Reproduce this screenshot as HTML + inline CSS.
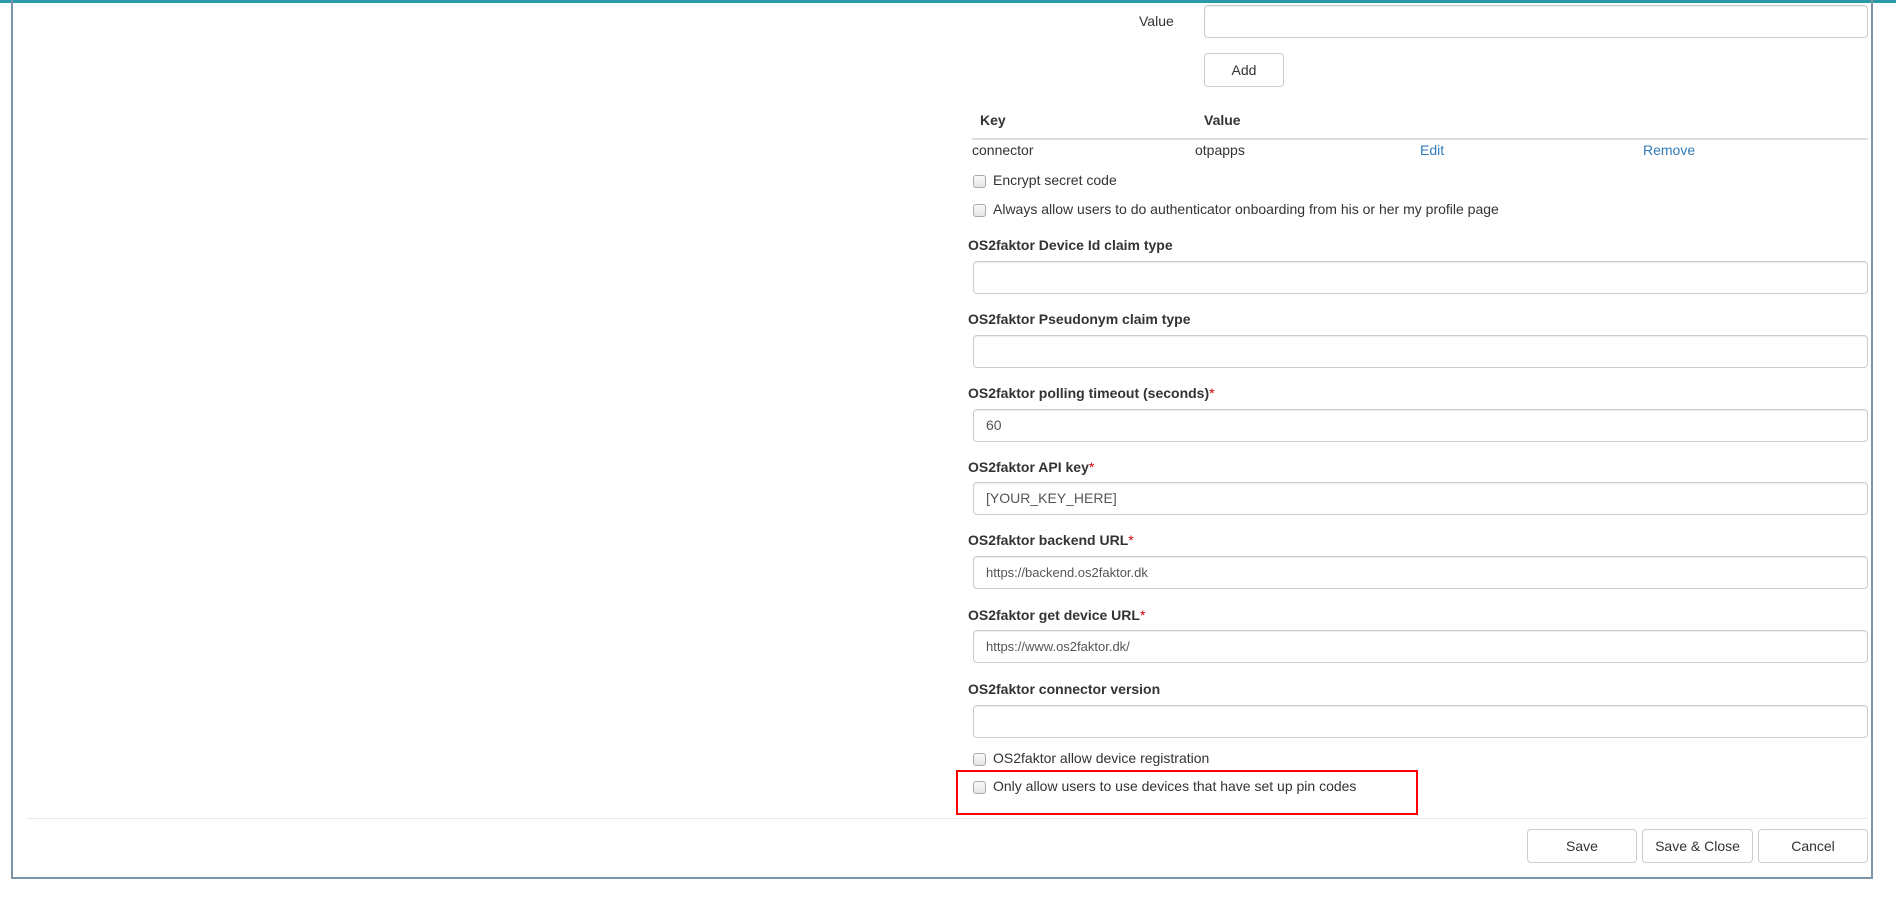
<!DOCTYPE html>
<html><head><meta charset="utf-8"><style>
*{box-sizing:border-box;margin:0;padding:0}
body{width:1896px;height:898px;background:#fff;font-family:"Liberation Sans",Arial,sans-serif;font-size:14px;color:#333;position:relative;overflow:hidden}
.a{position:absolute;white-space:nowrap}
.topbar{position:absolute;left:0;top:0;width:1896px;height:3px;background:#2a9aa8}
.frame{position:absolute;left:11px;top:-2px;width:1862px;height:881px;border:2px solid #7d95ab;border-top:none}
.inp{position:absolute;left:973px;width:895px;height:33px;border:1px solid #ccc;border-radius:4px;box-shadow:inset 0 1px 1px rgba(0,0,0,.075);padding:0 12px;line-height:31px;color:#555;font-size:14px}
.lbl{position:absolute;left:968px;font-weight:bold;font-size:14px;color:#333;line-height:16px}
.req{color:#c00;font-weight:normal}
.cb{position:absolute;left:973px;width:13px;height:13px;border:1px solid #aaa;border-radius:3px;background:linear-gradient(#fafafa,#e4e4e4)}
.ct{position:absolute;left:993px;line-height:16px}
.btn{position:absolute;height:34px;border:1px solid #ccc;border-radius:4px;background:#fff;text-align:center;line-height:32px;color:#333}
a{color:#337ab7;text-decoration:none}
</style></head><body>
<div class="topbar"></div>
<div class="frame"></div>

<div class="a" style="left:1139px;top:13px;line-height:16px">Value</div>
<div class="inp" style="left:1204px;width:664px;top:5px;height:33px"></div>
<div class="btn" style="left:1204px;top:53px;width:80px">Add</div>

<div class="a" style="left:980px;top:112px;font-weight:bold">Key</div>
<div class="a" style="left:1204px;top:112px;font-weight:bold">Value</div>
<div class="a" style="left:972px;top:138px;width:896px;height:2px;background:#ddd"></div>
<div class="a" style="left:972px;top:142px">connector</div>
<div class="a" style="left:1195px;top:142px">otpapps</div>
<div class="a" style="left:1420px;top:142px"><a>Edit</a></div>
<div class="a" style="left:1643px;top:142px"><a>Remove</a></div>

<div class="cb" style="top:175px"></div><div class="ct" style="top:172px">Encrypt secret code</div>
<div class="cb" style="top:204px"></div><div class="ct" style="top:201px">Always allow users to do authenticator onboarding from his or her my profile page</div>

<div class="lbl" style="top:237px">OS2faktor Device Id claim type</div>
<div class="inp" style="top:261px"></div>
<div class="lbl" style="top:311px">OS2faktor Pseudonym claim type</div>
<div class="inp" style="top:335px"></div>
<div class="lbl" style="top:385px">OS2faktor polling timeout (seconds)<span class="req">*</span></div>
<div class="inp" style="top:409px">60</div>
<div class="lbl" style="top:459px">OS2faktor API key<span class="req">*</span></div>
<div class="inp" style="top:482px">[YOUR_KEY_HERE]</div>
<div class="lbl" style="top:532px">OS2faktor backend URL<span class="req">*</span></div>
<div class="inp" style="top:556px;font-size:13px">https://backend.os2faktor.dk</div>
<div class="lbl" style="top:607px">OS2faktor get device URL<span class="req">*</span></div>
<div class="inp" style="top:630px;font-size:13px">https://www.os2faktor.dk/</div>
<div class="lbl" style="top:681px">OS2faktor connector version</div>
<div class="inp" style="top:705px"></div>

<div class="cb" style="top:753px"></div><div class="ct" style="top:750px">OS2faktor allow device registration</div>
<div class="cb" style="top:781px"></div><div class="ct" style="top:778px">Only allow users to use devices that have set up pin codes</div>
<div class="a" style="left:956px;top:770px;width:462px;height:45px;border:2px solid #f00"></div>

<div class="a" style="left:27px;top:818px;width:1841px;height:1px;background:#e8e8e8"></div>
<div class="btn" style="left:1527px;top:829px;width:110px">Save</div>
<div class="btn" style="left:1642px;top:829px;width:111px">Save &amp; Close</div>
<div class="btn" style="left:1758px;top:829px;width:110px">Cancel</div>
</body></html>
